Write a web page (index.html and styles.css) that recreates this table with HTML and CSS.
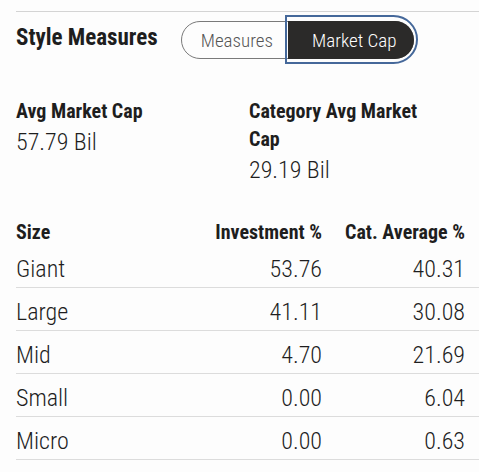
FILE: index.html
```html
<!DOCTYPE html>
<html lang="en">
  <head>
    <meta charset="UTF-8" />
    <meta name="viewport" content="width=device-width, initial-scale=1.0" />
    <title>Style Measures</title>
    <link rel="stylesheet" href="styles.css">
  </head>
  <body>
    <section class="measures">
      <header class="measures-header">
        <h2 class="measures-title">Style Measures</h2>
        <div class="toggle" role="tablist">
          <button type="button" class="toggle-button">Measures</button>
          <button type="button" class="toggle-button is-active">Market Cap</button>
        </div>
      </header>

      <div class="summary">
        <div class="summary-item">
          <div class="summary-label">Avg Market Cap</div>
          <div class="summary-value">57.79 Bil</div>
        </div>
        <div class="summary-item">
          <div class="summary-label">Category Avg Market Cap</div>
          <div class="summary-value">29.19 Bil</div>
        </div>
      </div>

      <table class="cap-table">
        <colgroup>
          <col class="col-size" />
          <col class="col-invest" />
          <col class="col-cat" />
        </colgroup>
        <thead>
          <tr>
            <th>Size</th>
            <th class="num">Investment %</th>
            <th class="num">Cat. Average %</th>
          </tr>
        </thead>
        <tbody>
          <tr><td>Giant</td><td class="num">53.76</td><td class="num">40.31</td></tr>
          <tr><td>Large</td><td class="num">41.11</td><td class="num">30.08</td></tr>
          <tr><td>Mid</td><td class="num">4.70</td><td class="num">21.69</td></tr>
          <tr><td>Small</td><td class="num">0.00</td><td class="num">6.04</td></tr>
          <tr><td>Micro</td><td class="num">0.00</td><td class="num">0.63</td></tr>
        </tbody>
      </table>
    </section>
  </body>
</html>
```

FILE: styles.css
```css
*,
*::before,
*::after {
  box-sizing: border-box;
}

body {
  margin: 0;
  background-color: #fdfdfd;
  color: #1e1e1e;
  font-family: "Liberation Sans Narrow", "Roboto Condensed", "Liberation Sans",
    sans-serif;
}

.measures {
  margin: 11px 0 0 16px;
  border-top: 1px solid #d4d4d4;
}

.measures-header {
  display: flex;
  align-items: center;
  gap: 23px;
  padding-top: 9px;
}

.measures-title {
  margin: 0 0 5px;
  font-size: 23px;
  font-weight: bold;
}

.toggle {
  display: flex;
  height: 38px;
  border: 1px solid #7a7a7a;
  border-radius: 19px;
}

.toggle-button {
  all: unset;
  cursor: pointer;
  display: flex;
  align-items: center;
  padding: 0 15px 0 19px;
  font-size: 19px;
  font-weight: 300;
  color: #555;
}

.toggle-button.is-active {
  position: relative;
  margin: -1px -1px -1px 0;
  padding: 0 18px 0 24px;
  border-radius: 0 19px 19px 0;
  background-color: #2b2a29;
  color: #fff;
}

.toggle-button.is-active::after {
  content: "";
  position: absolute;
  inset: -6px -4px -5px -3px;
  border: 2.5px solid #45689a;
  border-radius: 0 25px 25px 0;
}

.summary {
  display: grid;
  grid-template-columns: 233px 185px;
  padding-top: 38px;
}

.summary-label {
  font-size: 20px;
  font-weight: bold;
  line-height: 28px;
}

.summary-value {
  font-size: 24px;
  font-weight: 300;
  line-height: 34px;
}

.cap-table {
  margin-top: 33px;
  width: 463px;
  border-collapse: collapse;
  table-layout: fixed;
}

.col-size {
  width: 197px;
}

.col-invest {
  width: 109px;
}

.col-cat {
  width: 157px;
}

.cap-table th {
  height: 23px;
  padding: 0;
  font-size: 20px;
  font-weight: bold;
  line-height: 24px;
  text-align: left;
  vertical-align: top;
  white-space: nowrap;
}

.cap-table td {
  height: 43px;
  padding: 0 0 6px;
  font-size: 24px;
  font-weight: 300;
  line-height: 24px;
  border-bottom: 1px solid #dcdcdc;
  vertical-align: bottom;
}

.cap-table .num {
  text-align: right;
}

.cap-table th:last-child,
.cap-table td:last-child {
  padding-right: 14px;
}
```
